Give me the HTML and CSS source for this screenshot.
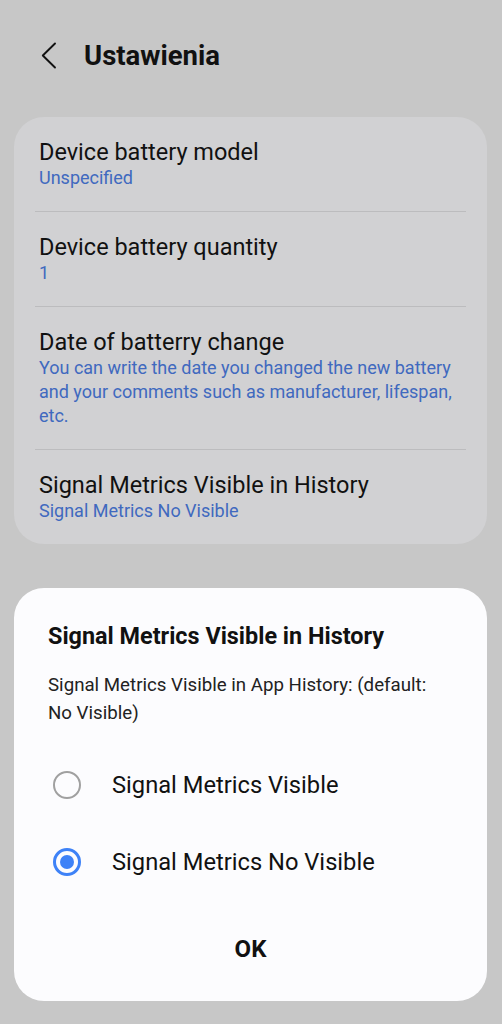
FILE: index.html
```html
<!DOCTYPE html>
<html>
  <head>
    <meta charset="UTF-8">
    <title>Ustawienia</title>
    <link rel="stylesheet" href="styles.css">
  </head>
  <body>
    <div class="header">
      <svg class="back" width="16" height="27" viewBox="0 0 16 27">
        <path d="M14 1.5 L1.8 13.5 L14 25.5" fill="none" stroke="#111" stroke-width="1.9" stroke-linecap="round" stroke-linejoin="round"/>
      </svg>
      <h1>Ustawienia</h1>
    </div>

    <div class="card">
      <div class="item">
        <div class="item-title">Device battery model</div>
        <div class="item-sub">Unspecified</div>
      </div>
      <div class="item">
        <div class="item-title">Device battery quantity</div>
        <div class="item-sub">1</div>
      </div>
      <div class="item">
        <div class="item-title">Date of batterry change</div>
        <div class="item-sub">You can write the date you changed the new battery and your comments such as manufacturer, lifespan, etc.</div>
      </div>
      <div class="item">
        <div class="item-title">Signal Metrics Visible in History</div>
        <div class="item-sub">Signal Metrics No Visible</div>
      </div>
    </div>

    <!-- bottom sheet dialog -->
    <div class="dialog">
      <h2>Signal Metrics Visible in History</h2>
      <p class="desc">Signal Metrics Visible in App History: (default: No Visible)</p>
      <div class="options">
        <div class="option">
          <span class="radio"></span>
          <span class="label">Signal Metrics Visible</span>
        </div>
        <div class="option">
          <span class="radio checked"></span>
          <span class="label">Signal Metrics No Visible</span>
        </div>
      </div>
      <div class="ok">OK</div>
    </div>
  </body>
</html>
```

FILE: styles.css
```css
body {
	background-color: #c7c7c7;
	font-family: Roboto, "Liberation Sans", sans-serif;
	margin: 0;
	padding: 0;
	height: 1024px;
	position: relative;
	overflow: hidden;
	color: #111;
}

.header {
	display: flex;
	align-items: center;
	height: 110px;
	padding-left: 41px;
	box-sizing: border-box;
}

.back {
	margin-right: 27px;
}

h1 {
	font-size: 27.5px;
	font-weight: bold;
	margin: 0;
}

.card {
	background-color: #d1d1d3;
	border-radius: 30px;
	margin: 7px 15px 0 14px;
	padding: 0 21px;
}

.item {
	padding: 21px 4px;
	border-bottom: 1px solid #bcbcbe;
}

.item:last-child {
	border-bottom: none;
}

.item-title {
	font-size: 23.5px;
	line-height: 28px;
}

.item-sub {
	color: #4069bf;
	font-size: 18px;
	line-height: 24px;
}

.dialog {
	position: absolute;
	left: 14px;
	right: 15px;
	bottom: 23px;
	background-color: #fcfcfe;
	border-radius: 30px;
	padding: 34px 34px 38px;
}

h2 {
	font-size: 23.4px;
	line-height: 28px;
	font-weight: bold;
	margin: 0 0 21px;
}

.desc {
	font-size: 18.7px;
	line-height: 28px;
	margin: 0 0 19px;
	color: #222;
}

.option {
	display: flex;
	align-items: center;
	height: 77px;
}

.radio {
	width: 28px;
	height: 28px;
	border: 2px solid #a0a0a0;
	border-radius: 50%;
	margin-left: 5px;
	margin-right: 31px;
	box-sizing: border-box;
	position: relative;
}

.radio.checked {
	border: 3px solid #3e82f7;
}

.radio.checked::after {
	content: "";
	position: absolute;
	left: 4px;
	top: 4px;
	width: 14px;
	height: 14px;
	border-radius: 50%;
	background-color: #3e82f7;
}

.label {
	font-size: 23.7px;
}

.ok {
	text-align: center;
	font-size: 24px;
	line-height: 28px;
	font-weight: bold;
	margin-top: 35px;
}
```
